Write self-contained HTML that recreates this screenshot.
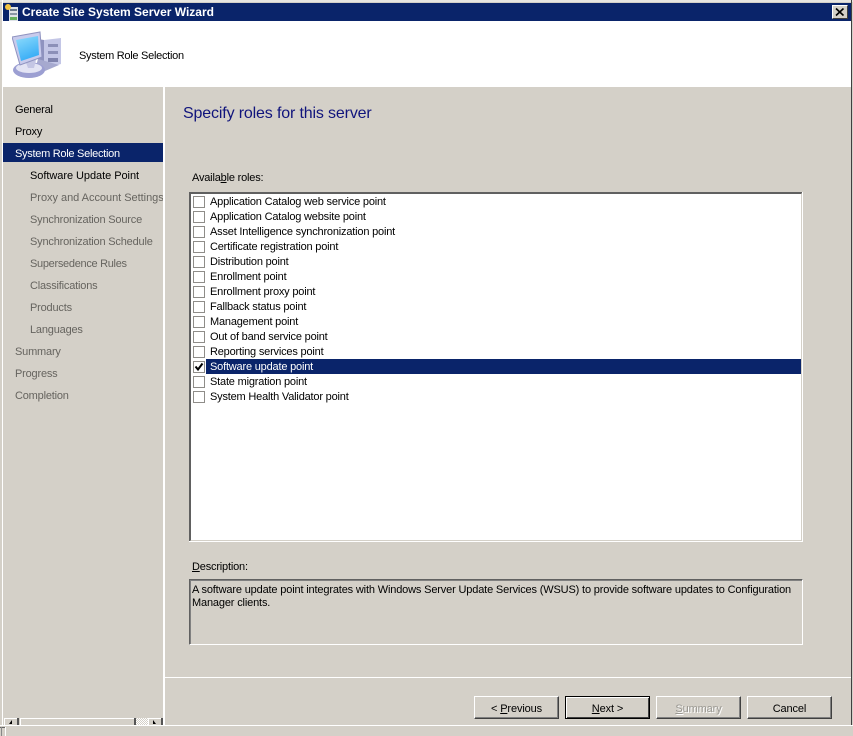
<!DOCTYPE html>
<html><head><meta charset="utf-8"><style>
html,body{margin:0;padding:0}
body{width:853px;height:736px;overflow:hidden;background:#d4d0c8;position:relative;font-family:"Liberation Sans",sans-serif;font-size:11px;letter-spacing:-.19px;color:#000}
.a{position:absolute}
.t{position:absolute;white-space:nowrap;line-height:14px;height:14px}
.g{color:#66645f}
.cb{position:absolute;left:193px;width:10px;height:10px;background:#fff;border:1px solid #8f8d89}
.btn{position:absolute;top:696px;height:23px;width:85px;box-sizing:border-box;background:#d4d0c8;border:1px solid;border-color:#fff #404040 #404040 #fff;box-shadow:inset -1px -1px 0 #808080;text-align:center;line-height:25px;letter-spacing:-.12px;overflow:hidden}
u{text-decoration:underline}
</style></head><body>
<div class="a" style="left:0;top:0;width:853px;height:2px;background:#e8e6e1"></div>
<div class="a" style="left:2px;top:0;width:1px;height:725px;background:#fff"></div>
<div class="a" style="left:851px;top:0;width:1px;height:725px;background:#404040"></div>
<div class="a" style="left:3px;top:3px;width:848px;height:18px;background:#0a246a"></div>
<div class="a" style="left:3px;top:21px;width:848px;height:66px;background:#fff"></div>
<svg class="a" style="left:5px;top:3px" width="14" height="18" viewBox="0 0 14 18"><rect x="4" y="4" width="9" height="14" fill="#dfe3e8"/><rect x="5" y="6" width="7" height="2" fill="#6b7a8c"/><rect x="5" y="10" width="7" height="2" fill="#8a97a6"/><rect x="5" y="14" width="7" height="3" fill="#66b060"/><circle cx="3" cy="4" r="3" fill="#f5c542"/></svg>
<div class="t" style="left:22px;top:5px;color:#fff;font-weight:bold;font-size:12px;letter-spacing:0">Create Site System Server Wizard</div>
<div class="a" style="left:832px;top:5px;width:16px;height:14px;box-sizing:border-box;background:#d4d0c8;border:1px solid;border-color:#fff #404040 #404040 #fff"></div>
<svg class="a" style="left:832px;top:5px" width="16" height="14"><path d="M4 3.500L11.500 10.500M11.500 3.500L4 10.500" stroke="#000" stroke-width="1.6"/></svg>
<svg class="a" style="left:12px;top:31px" width="52" height="50" viewBox="0 0 52 50">
<defs><linearGradient id="s" x1="0" y1="0" x2="0.4" y2="1"><stop offset="0" stop-color="#8fdcfc"/><stop offset="1" stop-color="#3aaef6"/></linearGradient></defs>
<path d="M32 9L49 7V33L32 38Z" fill="#c3c6e6"/><path d="M26 8L32 9V38L26 36Z" fill="#8f93bf"/>
<rect x="36" y="13" width="10" height="3" fill="#8c90b8"/><rect x="36" y="20" width="10" height="3" fill="#8c90b8"/><rect x="36" y="27" width="10" height="4" fill="#7f83ad"/>
<path d="M26 28L47 34L33 40L24 35Z" fill="#a6a9cf"/>
<ellipse cx="17" cy="39" rx="16" ry="8" fill="#9c9fd2"/><ellipse cx="17" cy="37" rx="13" ry="5" fill="#e3e4f4"/><path d="M13 29H24L22 37H16Z" fill="#c4c6e4"/>
<path d="M0 6L28 1L30 26L8 34Z" fill="#c8cbec" stroke="#8f93c0"/>
<path d="M4 9L26 5L27 24L9 30Z" fill="url(#s)"/>
</svg>
<div class="t" style="left:79px;top:49px;letter-spacing:-.28px">System Role Selection</div>

<div class="a" style="left:163px;top:87px;width:2px;height:638px;background:#fff"></div>
<div class="a" style="left:165px;top:677px;width:686px;height:1px;background:#fff"></div>
<div class="a" style="left:0;top:725px;width:853px;height:1px;background:#fff"></div>
<div class="a" style="left:3px;top:143px;width:160px;height:19px;background:#0a246a"></div>

<div class="t" style="left:15px;top:103px">General</div>
<div class="t" style="left:15px;top:125px">Proxy</div>
<div class="t" style="left:15px;top:147px;color:#fff;letter-spacing:-.28px">System Role Selection</div>
<div class="t" style="left:30px;top:169px;letter-spacing:-.05px">Software Update Point</div>
<div class="t g" style="left:30px;top:191px;width:133px;overflow:hidden;letter-spacing:-.03px">Proxy and Account Settings</div>
<div class="t g" style="left:30px;top:213px">Synchronization Source</div>
<div class="t g" style="left:30px;top:235px">Synchronization Schedule</div>
<div class="t g" style="left:30px;top:257px;letter-spacing:-.3px">Supersedence Rules</div>
<div class="t g" style="left:30px;top:279px">Classifications</div>
<div class="t g" style="left:30px;top:301px">Products</div>
<div class="t g" style="left:30px;top:323px">Languages</div>
<div class="t g" style="left:15px;top:345px">Summary</div>
<div class="t g" style="left:15px;top:367px">Progress</div>
<div class="t g" style="left:15px;top:389px">Completion</div>

<!-- left scrollbar -->
<div class="a" style="left:4px;top:718px;width:14px;height:1px;background:#fff"></div>
<div class="a" style="left:4px;top:718px;width:1px;height:7px;background:#fff"></div>
<div class="a" style="left:17px;top:718px;width:2px;height:7px;background:#555"></div>
<div class="a" style="left:20px;top:718px;width:115px;height:1px;background:#fff"></div>
<div class="a" style="left:20px;top:718px;width:1px;height:7px;background:#fff"></div>
<div class="a" style="left:134px;top:718px;width:2px;height:7px;background:#555"></div>
<div class="a" style="left:136px;top:718px;width:12px;height:7px;background:repeating-conic-gradient(#fff 0 25%,#d4d0c8 0 50%) 0 0/2px 2px"></div>
<div class="a" style="left:148px;top:718px;width:13px;height:1px;background:#fff"></div>
<div class="a" style="left:148px;top:718px;width:1px;height:7px;background:#fff"></div>
<div class="a" style="left:161px;top:718px;width:2px;height:7px;background:#555"></div>
<svg class="a" style="left:9px;top:720px" width="4" height="5"><path d="M3 0V4H0Z" fill="#000"/></svg>
<svg class="a" style="left:153px;top:720px" width="4" height="5"><path d="M0 0V4H3Z" fill="#000"/></svg>
<div class="a" style="left:0;top:727px;width:5px;height:1px;background:#666"></div>
<div class="a" style="left:1px;top:727px;width:1px;height:9px;background:#888"></div>
<div class="a" style="left:5px;top:727px;width:1px;height:9px;background:#fff"></div>

<div class="t" style="left:183px;top:104px;height:19px;line-height:19px;font-size:16px;letter-spacing:-.15px;color:#10147c">Specify roles for this server</div>
<div class="t" style="left:192px;top:171px">Availa<u>b</u>le roles:</div>

<div class="a" style="left:189px;top:192px;width:614px;height:350px;box-sizing:border-box;background:#fff;border:2px solid;border-color:#606060 #d4d0c8 #d4d0c8 #606060"></div>
<div class="a" style="left:802px;top:192px;width:1px;height:350px;background:#fff"></div>
<div class="a" style="left:189px;top:541px;width:614px;height:1px;background:#fff"></div>
<div class="a" style="left:206px;top:359px;width:595px;height:15px;background:#0a246a"></div>

<div class="cb" style="top:196px"></div><div class="t" style="left:210px;top:195px">Application Catalog web service point</div>
<div class="cb" style="top:211px"></div><div class="t" style="left:210px;top:210px">Application Catalog website point</div>
<div class="cb" style="top:226px"></div><div class="t" style="left:210px;top:225px">Asset Intelligence synchronization point</div>
<div class="cb" style="top:241px"></div><div class="t" style="left:210px;top:240px">Certificate registration point</div>
<div class="cb" style="top:256px"></div><div class="t" style="left:210px;top:255px">Distribution point</div>
<div class="cb" style="top:271px"></div><div class="t" style="left:210px;top:270px">Enrollment point</div>
<div class="cb" style="top:286px"></div><div class="t" style="left:210px;top:285px">Enrollment proxy point</div>
<div class="cb" style="top:301px"></div><div class="t" style="left:210px;top:300px">Fallback status point</div>
<div class="cb" style="top:316px"></div><div class="t" style="left:210px;top:315px">Management point</div>
<div class="cb" style="top:331px"></div><div class="t" style="left:210px;top:330px">Out of band service point</div>
<div class="cb" style="top:346px"></div><div class="t" style="left:210px;top:345px">Reporting services point</div>
<div class="cb" style="top:361px"></div><div class="t" style="left:210px;top:360px;color:#fff">Software update point</div>
<svg class="a" style="left:193px;top:361px" width="12" height="12"><path d="M2.500 5.500L5 8.500L9.500 2.500" fill="none" stroke="#000" stroke-width="2"/></svg>
<div class="cb" style="top:376px"></div><div class="t" style="left:210px;top:375px">State migration point</div>
<div class="cb" style="top:391px"></div><div class="t" style="left:210px;top:390px">System Health Validator point</div>

<div class="t" style="left:192px;top:560px"><u>D</u>escription:</div>
<div class="a" style="left:189px;top:579px;width:614px;height:66px;box-sizing:border-box;border:1px solid;border-color:#606060 #fff #fff #606060;box-shadow:inset 1px 1px 0 #808080"></div>
<div class="t" style="left:192px;top:583px;letter-spacing:-.157px">A software update point integrates with Windows Server Update Services (WSUS) to provide software updates to Configuration</div>
<div class="t" style="left:192px;top:596px;letter-spacing:-.157px">Manager clients.</div>

<div class="btn" style="left:474px">&lt; <u>P</u>revious</div>
<div class="btn" style="left:565px;border:1px solid #000;box-shadow:inset 1px 1px 0 #fff,inset -1px -1px 0 #404040"><u>N</u>ext &gt;</div>
<div class="btn" style="left:656px;color:#9a9892;text-shadow:1px 1px 0 #fff"><u>S</u>ummary</div>
<div class="btn" style="left:747px">Cancel</div>
</body></html>
